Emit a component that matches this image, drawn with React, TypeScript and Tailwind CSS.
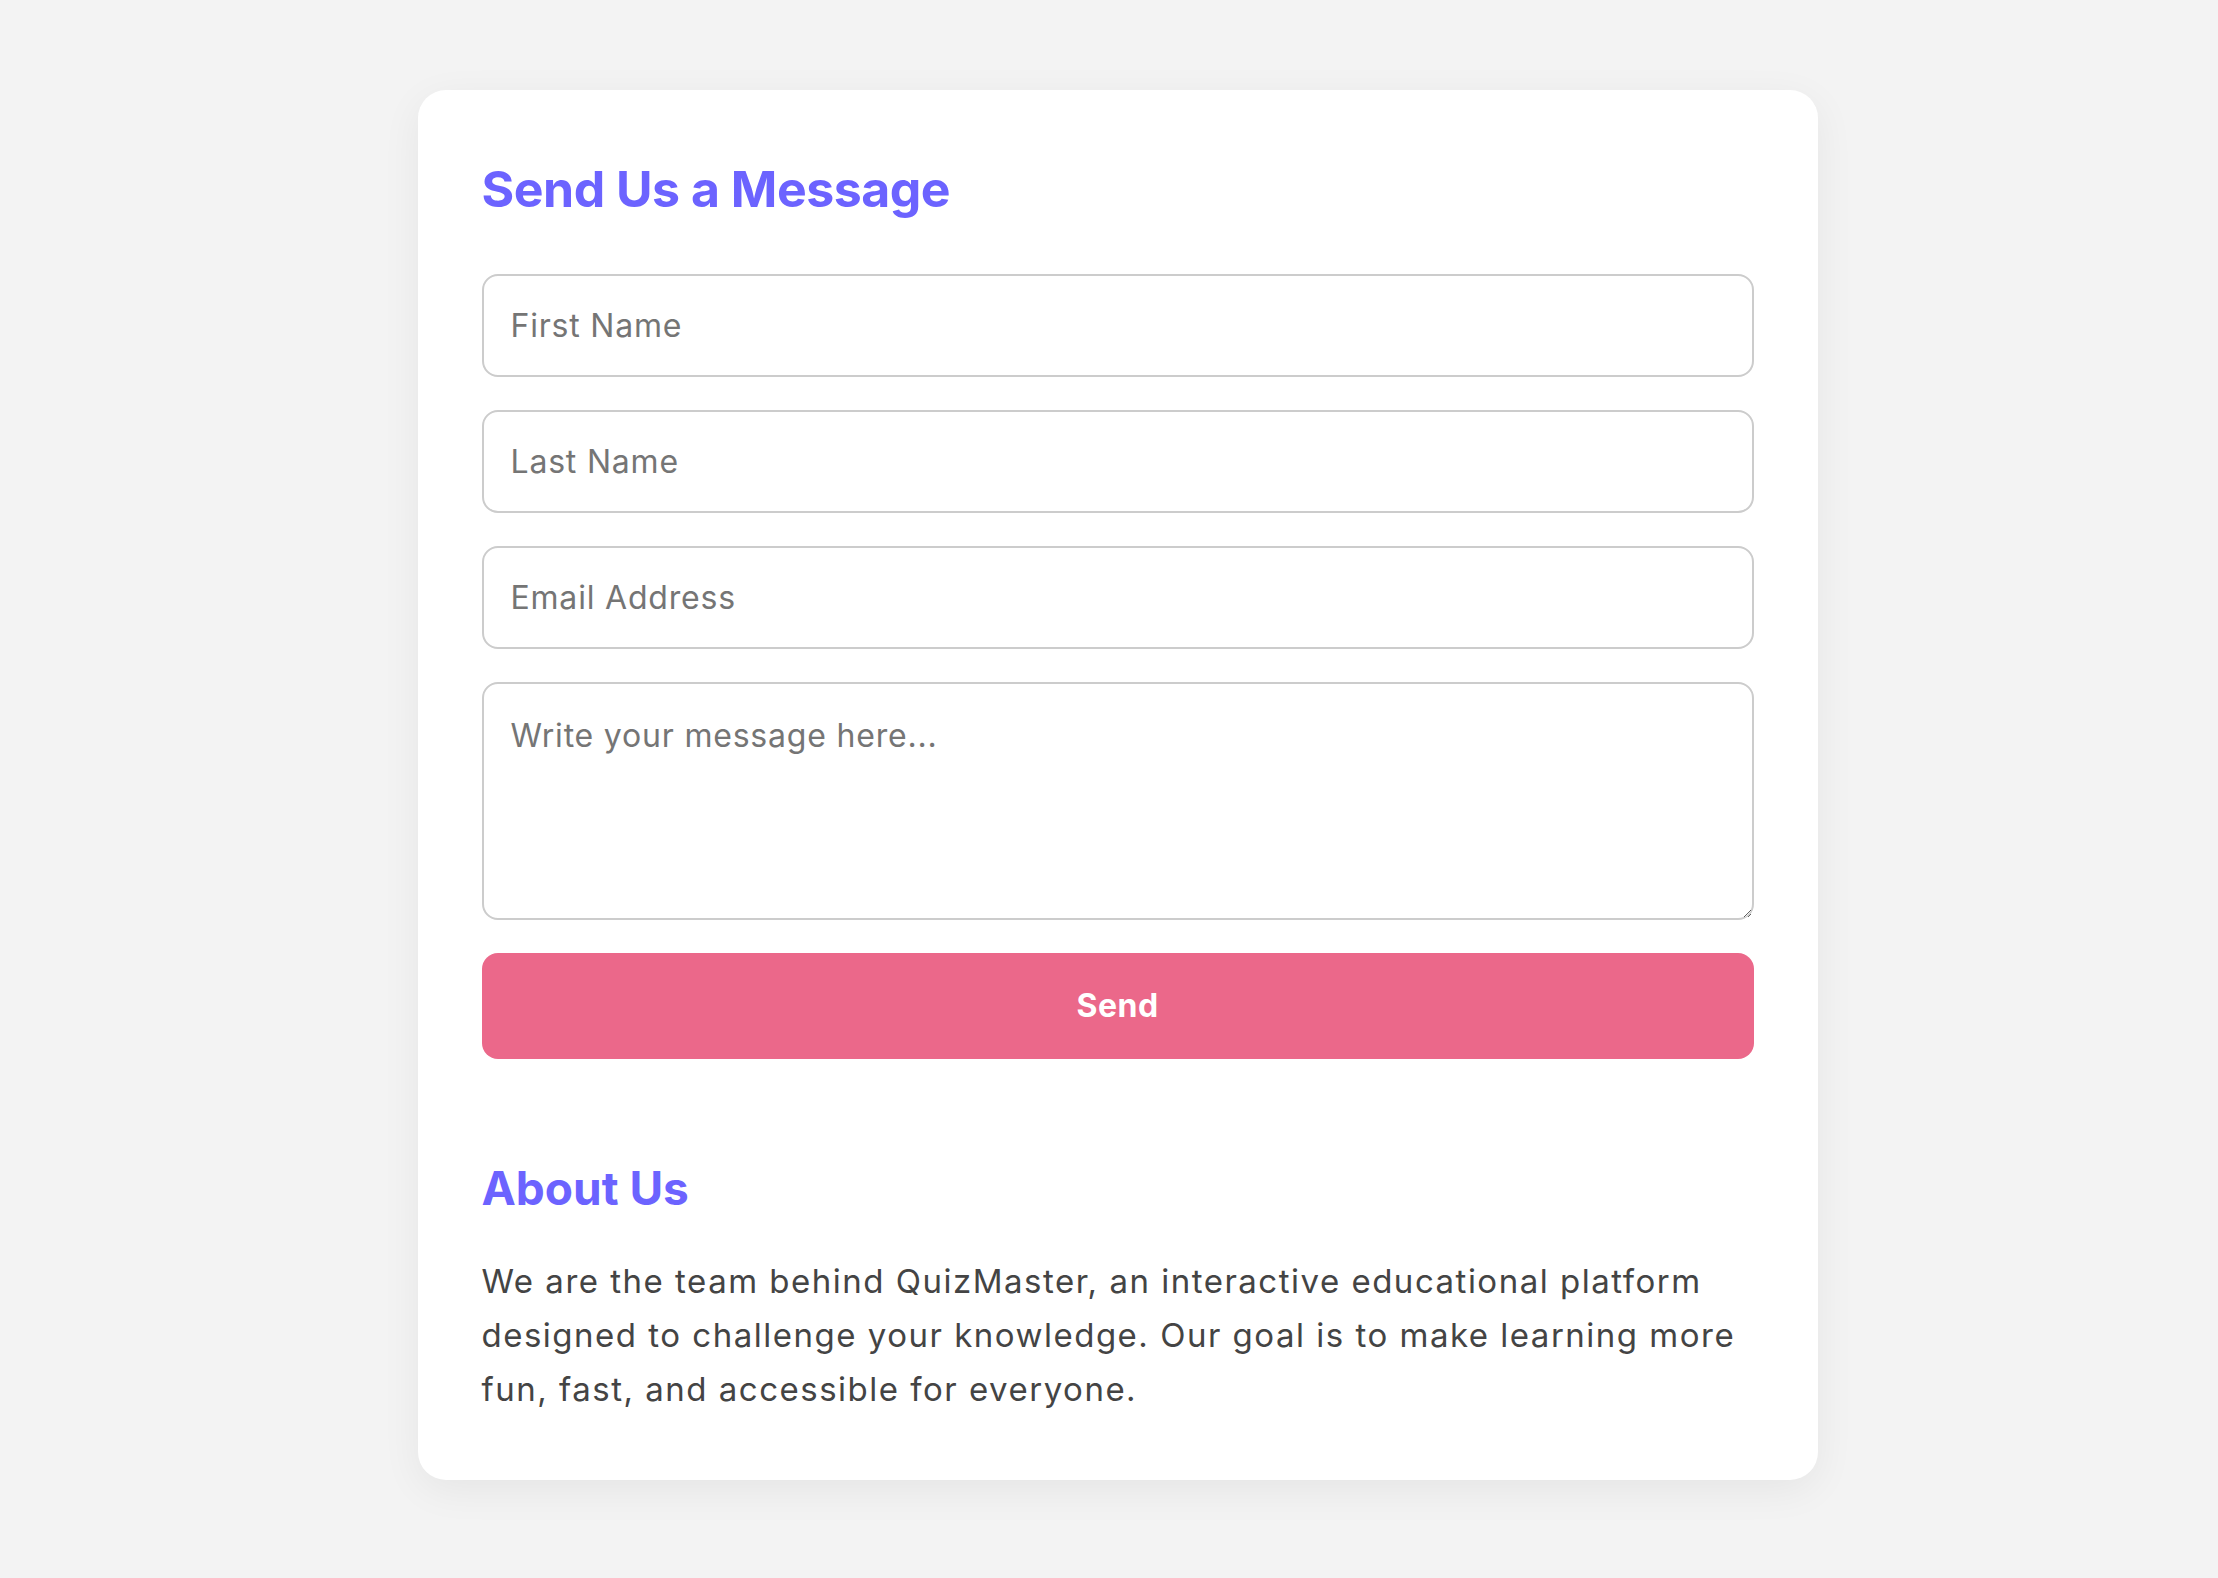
import { useState } from "react";

const font = { fontFamily: "Inter, 'Noto Sans', sans-serif" };

export default function App() {
  const [form, setForm] = useState({ first: "", last: "", email: "", message: "" });

  const field =
    "w-full h-[103px] rounded-[16px] border-2 border-[#cccccc] bg-white px-[27px] text-[32px] tracking-[0.8px] text-[#333] placeholder:text-[#757575] outline-none";

  return (
    <div
      className="min-h-screen w-full bg-[#f3f3f3] flex justify-center pl-[17px] pt-[90px] pb-[100px]"
      style={font}
    >
      <div className="w-[1400px] bg-white rounded-[28px] shadow-[0_10px_40px_rgba(0,0,0,0.06)] px-[64px] pt-[64px] pb-[64px]">
        <h1 className="mt-[10px] text-[50px] leading-none font-bold text-[#6c63ff] tracking-[-0.5px]">
          Send Us a Message
        </h1>

        <form
          className="mt-[60px] flex flex-col gap-[33px]"
          onSubmit={(e) => e.preventDefault()}
        >
          <input
            className={field}
            placeholder="First Name"
            value={form.first}
            onChange={(e) => setForm({ ...form, first: e.target.value })}
          />
          <input
            className={field}
            placeholder="Last Name"
            value={form.last}
            onChange={(e) => setForm({ ...form, last: e.target.value })}
          />
          <input
            className={field}
            placeholder="Email Address"
            value={form.email}
            onChange={(e) => setForm({ ...form, email: e.target.value })}
          />
          <textarea
            className="w-full h-[238px] rounded-[16px] border-2 border-[#cccccc] bg-white px-[27px] pt-[28px] text-[32px] leading-[1.5] tracking-[0.8px] text-[#333] placeholder:text-[#757575] outline-none"
            placeholder="Write your message here..."
            value={form.message}
            onChange={(e) => setForm({ ...form, message: e.target.value })}
          />
          <button
            type="submit"
            className="w-full h-[106px] rounded-[16px] bg-[#eb688a] text-white text-[32px] font-bold tracking-[0.5px]"
          >
            Send
          </button>
        </form>

        <h2 className="mt-[106px] text-[46px] leading-none font-bold text-[#6c63ff]">
          About Us
        </h2>
        <p className="mt-[43px] text-[33px] leading-[54px] tracking-[1.5px] text-[#444444]">
          We are the team behind QuizMaster, an interactive educational platform
          designed to challenge your knowledge. Our goal is to make learning more
          fun, fast, and accessible for everyone.
        </p>
      </div>
    </div>
  );
}
